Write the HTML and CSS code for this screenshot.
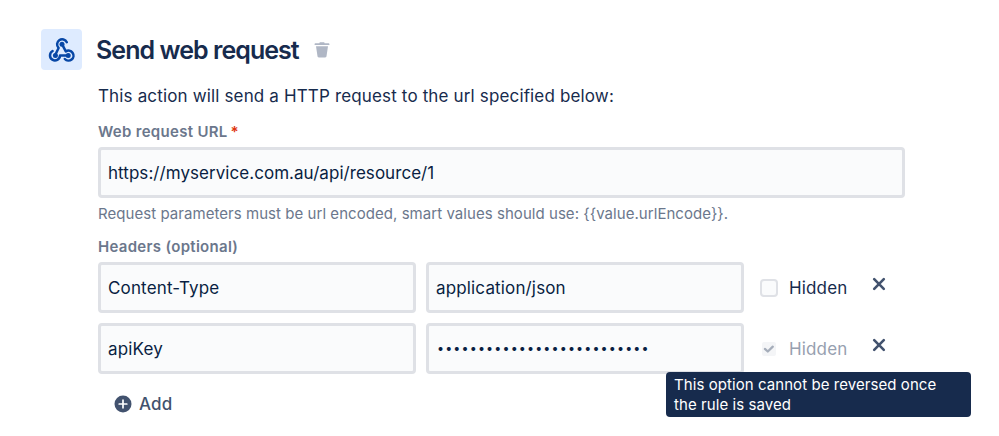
FILE: index.html
```html
<!DOCTYPE html>
<html lang="en">
<head>
    <meta charset="UTF-8">
    <meta name="viewport" content="width=device-width, initial-scale=1.0">
    <title>Send web request</title>
    <link rel="stylesheet" href="styles.css">
</head>
<body>
    <form class="action">
        <div class="header">
            <div class="action-icon">
                <svg width="28" height="28" viewBox="0 0 28 28" fill="none" stroke="#0747a6" stroke-width="2.5" stroke-linecap="round" stroke-linejoin="round">
                    <path d="M18.8 6.200A5.100 5.100 0 1 0 10.600 12L7.200 19"/>
                    <path d="M4.600 15A5 5 0 1 0 12 19.600H20"/>
                    <path d="M16.800 23A5 5 0 1 0 17.800 15.400L14 8.200"/>
                    <g fill="#0747a6" stroke="none">
                        <circle cx="14" cy="8.200" r="2.500"/>
                        <circle cx="7.400" cy="19.500" r="2.500"/>
                        <circle cx="20.200" cy="19.500" r="2.500"/>
                    </g>
                </svg>
            </div>
            <h1>Send web request</h1>
            <svg class="trash" width="16" height="16" viewBox="0 0 16 16" fill="#b0b7c5">
                <path d="M5.400 1.200C5.400.6 5.800.2 6.400.2h3.200c.6 0 1 .4 1 1h4.100c.4 0 .7.3.7.7v1.200H.6V1.900c0-.4.3-.7.7-.7z"/>
                <path d="M2 4.300h12l-1.500 9.900c-.1.700-.6 1.200-1.300 1.200H4.800c-.7 0-1.200-.5-1.300-1.200z"/>
            </svg>
        </div>
        <div class="content">
            <p class="description">This action will send a HTTP request to the url specified below:</p>
            <label class="label">Web request URL<span class="required">*</span></label>
            <input class="field url" type="text" value="https://myservice.com.au/api/resource/1">
            <p class="help">Request parameters must be url encoded, smart values should use: {{value.urlEncode}}.</p>
            <label class="label headers-label">Headers (optional)</label>
            <div class="row">
                <input class="field" type="text" value="Content-Type">
                <input class="field" type="text" value="application/json">
                <div class="hidden-option">
                    <span class="checkbox"></span>
                    <span>Hidden</span>
                </div>
                <svg class="remove" width="14" height="14" viewBox="0 0 14 14" stroke="#42526e" stroke-width="2.6" stroke-linecap="round">
                    <path d="M2.200 2.200l9.600 9.600M11.800 2.200l-9.600 9.600"/>
                </svg>
            </div>
            <div class="row">
                <input class="field" type="text" value="apiKey">
                <input class="field secret" type="password" value="abcdefghijklmnopqrstuvwxyz">
                <div class="hidden-option disabled">
                    <span class="checkbox">
                        <svg width="16" height="16" viewBox="0 0 16 16" fill="none" stroke="#a5adba" stroke-width="2.300" stroke-linecap="round" stroke-linejoin="round">
                            <path d="M3.900 7.900l2.900 2.600 5-4.800"/>
                        </svg>
                    </span>
                    <span>Hidden</span>
                    <div class="tooltip">This option cannot be reversed once the rule is saved</div>
                </div>
                <svg class="remove" width="14" height="14" viewBox="0 0 14 14" stroke="#42526e" stroke-width="2.6" stroke-linecap="round">
                    <path d="M2.200 2.200l9.600 9.600M11.800 2.200l-9.600 9.600"/>
                </svg>
            </div>
            <div class="add">
                <svg width="18" height="18" viewBox="0 0 18 18">
                    <circle cx="9" cy="9" r="8.500" fill="#42526e"/>
                    <path d="M9 5.200v7.600M5.200 9h7.600" stroke="#fff" stroke-width="1.700" stroke-linecap="round"/>
                </svg>
                <span>Add</span>
            </div>
        </div>
    </form>
</body>
</html>
```
FILE: styles.css
```css
* {
    box-sizing: border-box;
}
body {
    margin: 0;
    min-height: 100vh;
    background: #fff;
    font-family: Inter, "Liberation Sans", sans-serif;
    font-size: 17px;
    letter-spacing: 0.15px;
    color: #172b4d;
}
.action {
    min-height: 100vh;
    padding: 29px 0 0 40px;
}
.header {
    display: flex;
    align-items: center;
    height: 41px;
}
.action-icon {
    display: flex;
    align-items: center;
    justify-content: center;
    width: 41px;
    height: 41px;
    margin-left: 1px;
    background: #deebff;
    border-radius: 4px;
}
h1 {
    margin: 0 0 0 14px;
    width: 218px;
    font-size: 25px;
    font-weight: 600;
    line-height: 30px;
    letter-spacing: -0.95px;
    white-space: nowrap;
}
.content {
    width: 807px;
    margin-left: 58px;
}
p {
    margin: 0;
    white-space: nowrap;
}
.description {
    padding-top: 14px;
    line-height: 24px;
}
.label {
    display: block;
    margin-top: 14px;
    font-size: 15px;
    font-weight: 600;
    line-height: 20px;
    letter-spacing: 0.3px;
    color: #6b778c;
}
.required {
    margin-left: 3px;
    color: #de350b;
}
.field {
    display: block;
    width: 318px;
    height: 51px;
    padding: 0 7px;
    border: 3px solid #dfe1e6;
    border-radius: 4px;
    background: #fafbfc;
    font-family: inherit;
    font-size: 17px;
    letter-spacing: 0.15px;
    color: #091e42;
    outline: none;
}
.secret {
    padding-left: 8px;
    font-size: 12.5px;
    letter-spacing: 1.15px;
}
.url {
    width: 100%;
    margin-top: 5px;
    letter-spacing: 0.05px;
}
.help {
    margin-top: 6px;
    font-size: 15px;
    line-height: 20px;
    letter-spacing: 0.05px;
    color: #6b778c;
}
.headers-label {
    margin: 13px 0 5px;
}
.row {
    display: flex;
    gap: 10px;
    height: 51px;
    margin-bottom: 10px;
}
.hidden-option {
    position: relative;
    display: flex;
    align-items: center;
    gap: 11px;
    width: 108px;
    padding-left: 6px;
}
.checkbox {
    width: 18px;
    height: 18px;
    border: 2px solid #dfe1e6;
    border-radius: 4px;
    background: #fafbfc;
}
.disabled {
    color: #97a0af;
}
.disabled .checkbox {
    display: flex;
    align-items: center;
    justify-content: center;
    border-color: #fff;
    background: #f4f5f7;
}
.disabled .checkbox svg {
    flex: none;
}
.remove {
    margin-top: 15px;
}
/* sits over the row below the checkbox */
.tooltip {
    position: absolute;
    top: 49px;
    left: -88px;
    width: 305px;
    height: 45px;
    padding: 3px 24px 3px 8px;
    border-radius: 4px;
    background: #172b4d;
    color: #fff;
    font-size: 15px;
    line-height: 20px;
    letter-spacing: 0.07px;
}
.add {
    display: flex;
    align-items: center;
    gap: 7px;
    height: 24px;
    margin: 18px 0 0 16px;
    font-weight: 500;
    color: #42526e;
}
```
